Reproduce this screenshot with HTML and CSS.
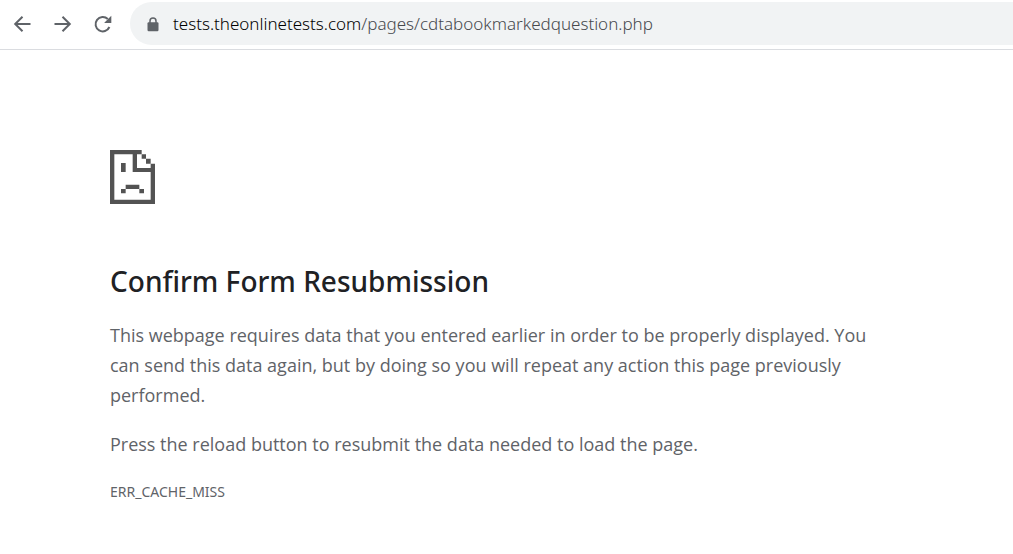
FILE: index.html
```html
<!DOCTYPE html>
<html lang="en">
<head>
<meta charset="utf-8">
<meta name="viewport" content="width=device-width, initial-scale=1">
<title>tests.theonlinetests.com</title>
<link rel="stylesheet" href="styles.css">
</head>
<body>
<header class="toolbar">
  <nav class="nav" aria-label="Browser navigation">
    <button class="nav-button" type="button" aria-label="Back">
      <svg class="icon" viewBox="0 0 20 20"><path d="M18.500 10H3.500M10.500 2.700L3.200 10L10.500 17.300"/></svg>
    </button>
    <button class="nav-button" type="button" aria-label="Forward">
      <svg class="icon" viewBox="0 0 20 20"><path d="M2.500 10H17.500M10.500 2.700L17.800 10L10.500 17.300"/></svg>
    </button>
    <button class="nav-button" type="button" aria-label="Reload">
      <svg class="icon" viewBox="0 0 20 20"><path d="M17.400 13A7.200 7.200 0 1 1 15.800 5"/><path class="solid" d="M19.300 1.800V9H12.100Z"/></svg>
    </button>
  </nav>
  <div class="address">
    <button class="lock" type="button" aria-label="View site information">
      <svg class="lock-icon" viewBox="0 0 12 16"><path class="shackle" d="M3 7V5A3 3 0 0 1 9 5V7"/><rect x="0.500" y="6.200" width="11" height="9" rx="1.200"/></svg>
    </button>
    <div class="url" role="textbox" contenteditable="true" spellcheck="false" aria-label="Address"><span class="host">tests.theonlinetests.com</span>/pages/cdtabookmarkedquestion.php</div>
  </div>
</header>
<main class="error">
  <svg class="sad-page" viewBox="0 0 135 162" aria-hidden="true">
    <path d="M0 0H95V13H81V54H122V41H135V162H0ZM13 13V149H122V66H68V13Z" fill-rule="evenodd"/>
    <path d="M95 13H108V26H95ZM108 26H122V41H108ZM33 39H47V66H33ZM47 104H88V117H47ZM33 117H47V130H33ZM88 117H102V130H88Z"/>
  </svg>
  <h1 class="title">Confirm Form Resubmission</h1>
  <p class="text">This webpage requires data that you entered earlier in order to be properly displayed. You can send this data again, but by doing so you will repeat any action this page previously performed.</p>
  <p class="text">Press the reload button to resubmit the data needed to load the page.</p>
  <p class="code">ERR_CACHE_MISS</p>
</main>
</body>
</html>
```
FILE: styles.css
```css
* {
  box-sizing: border-box;
}

body {
  margin: 0;
  background: #fff;
  color: #5f6368;
  font-family: "Noto Sans", "Open Sans", sans-serif;
}

.toolbar {
  display: flex;
  align-items: center;
  height: 50px;
  padding: 0 0 2px 12px;
  border-bottom: 1px solid #dadce0;
}

.nav {
  display: flex;
  gap: 20px;
  margin-right: 18px;
}

.nav-button,
.lock {
  display: flex;
  padding: 0;
  border: 0;
  background: none;
}

.icon {
  width: 20px;
  height: 20px;
  fill: none;
  stroke: #5f6368;
  stroke-width: 2;
}

.icon .solid {
  fill: #5f6368;
  stroke: none;
}

.address {
  display: flex;
  flex: 1;
  align-items: center;
  gap: 14px;
  height: 43px;
  padding-left: 17px;
  border-radius: 22px 0 0 22px;
  background: #f1f3f4;
}

.lock-icon {
  width: 12px;
  height: 16px;
  fill: #5f6368;
}

.lock-icon .shackle {
  fill: none;
  stroke: #5f6368;
  stroke-width: 1.500;
}

.url {
  flex: 1;
  color: #46494d;
  font-size: 17px;
  font-weight: 300;
  line-height: 24px;
  white-space: nowrap;
  outline: 0;
}

.host {
  color: #000;
}

.error {
  max-width: 880px;
  padding: 100px 0 40px 110px;
}

.sad-page {
  display: block;
  width: 45px;
  height: 54px;
  fill: #535353;
}

.title {
  margin: 58px 0 20px;
  color: #202124;
  font-size: 28px;
  font-weight: 500;
  line-height: 38px;
}

.text {
  margin: 0 0 19px;
  font-family: "Open Sans", "Noto Sans", sans-serif;
  font-size: 18px;
  line-height: 30px;
}

.code {
  margin: 0;
  font-size: 14px;
  line-height: 28px;
}
```
